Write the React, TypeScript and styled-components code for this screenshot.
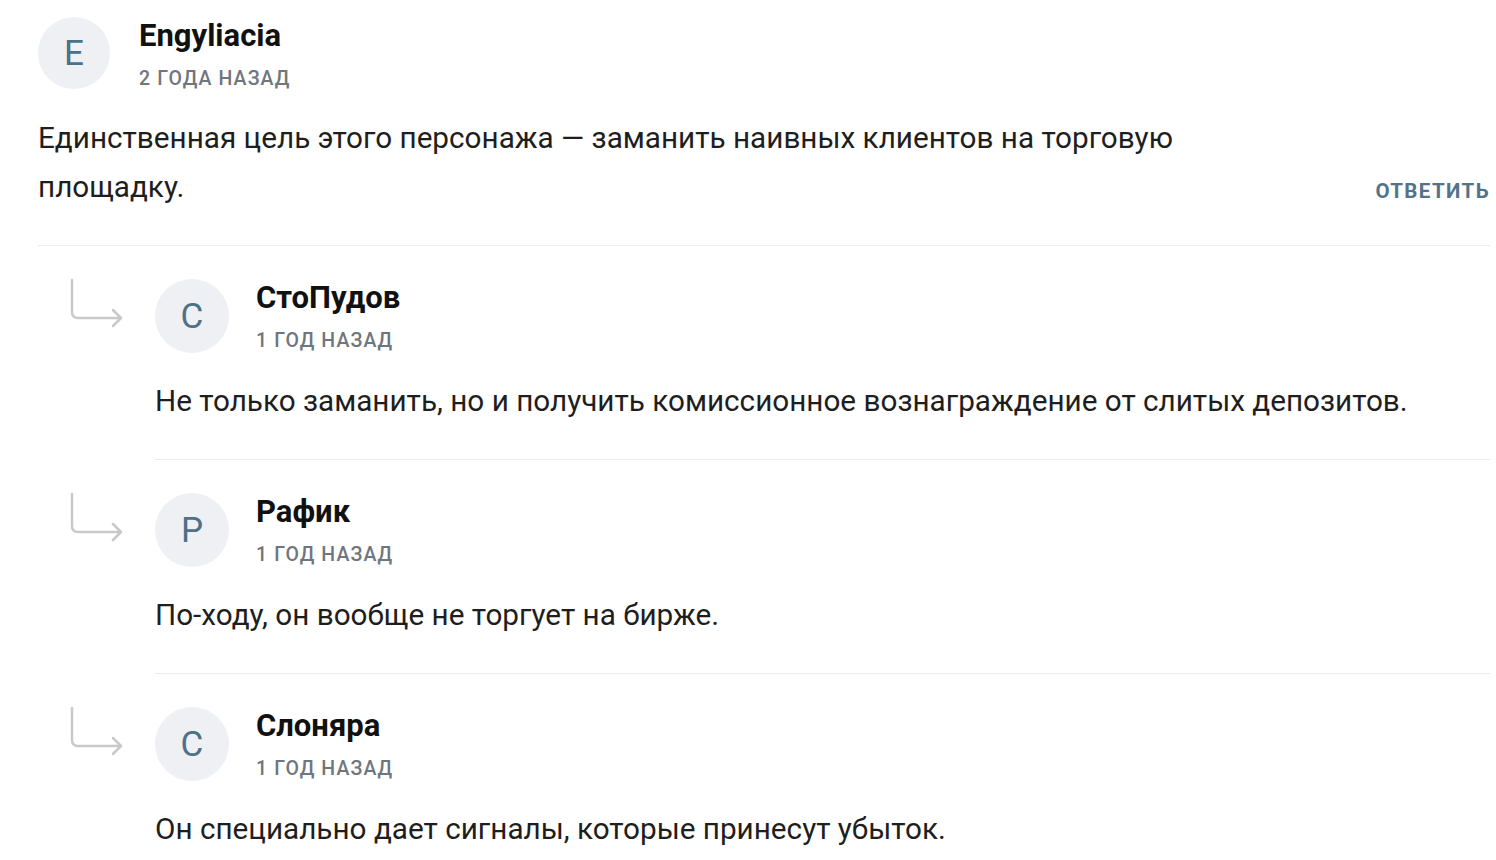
import React from 'react'
import styled, { createGlobalStyle } from 'styled-components'

const GlobalStyle = createGlobalStyle`
  html, body {
    margin: 0;
    padding: 0;
    background: #ffffff;
    font-family: Roboto, "Noto Sans", "Liberation Sans", sans-serif;
  }
`

const Page = styled.div`
  padding: 17px 6px 0 38px;
`

const Comment = styled.div`
  display: flex;
  flex-direction: column;
`

const Header = styled.div<{ $gap: number }>`
  display: flex;
  align-items: flex-start;
  gap: ${p => p.$gap}px;
`

const Avatar = styled.div<{ $size: number }>`
  width: ${p => p.$size}px;
  height: ${p => p.$size}px;
  border-radius: 50%;
  background: #eef0f3;
  color: #4d7187;
  font-size: 35px;
  display: flex;
  align-items: center;
  justify-content: center;
  flex-shrink: 0;
`

const Meta = styled.div`
  display: flex;
  flex-direction: column;
  padding-top: 1px;
`

const Name = styled.div`
  font-size: 31px;
  font-weight: 700;
  line-height: 36px;
  color: #111111;
`

const Date = styled.div`
  margin-top: 13px;
  font-size: 19.5px;
  font-weight: 500;
  line-height: 24px;
  letter-spacing: 1.1px;
  text-transform: uppercase;
  color: #6f767d;
`

const BodyRow = styled.div<{ $last?: boolean; $gap: number }>`
  display: flex;
  align-items: flex-end;
  justify-content: space-between;
  margin-top: ${p => p.$gap}px;
  padding-bottom: 34px;
  border-bottom: ${p => (p.$last ? 'none' : '1px solid #ececec')};
`

const Text = styled.p<{ $narrow?: boolean }>`
  margin: 0;
  max-width: ${p => (p.$narrow ? '1200px' : 'none')};
  font-size: 29.7px;
  line-height: 49px;
  color: #1e1e1e;
`

const ReplyButton = styled.button`
  border: none;
  background: none;
  padding: 0;
  margin-bottom: 8px;
  font-family: inherit;
  font-size: 20.5px;
  font-weight: 700;
  line-height: 24px;
  letter-spacing: 1.4px;
  color: #527389;
  cursor: pointer;
`

const Reply = styled.div`
  display: flex;
`

const ArrowCell = styled.div`
  width: 117px;
  flex-shrink: 0;
  padding: 32px 0 0 30px;
  box-sizing: border-box;
`

const ReplyBody = styled.div`
  flex: 1;
  padding-top: 33px;
`

const ReplyArrow = () => (
  <svg width="56" height="50" viewBox="0 0 56 50" fill="none">
    <path
      d="M4 2 V34 Q4 40 10 40 H53 M45 32 L53 40 L45 48"
      stroke="#c9c9c9"
      strokeWidth="2.5"
      strokeLinecap="round"
      strokeLinejoin="round"
    />
  </svg>
)

const replies = [
  {
    letter: 'С',
    name: 'СтоПудов',
    date: '1 год назад',
    text: 'Не только заманить, но и получить комиссионное вознаграждение от слитых депозитов.',
  },
  { letter: 'Р', name: 'Рафик', date: '1 год назад', text: 'По-ходу, он вообще не торгует на бирже.' },
  {
    letter: 'С',
    name: 'Слоняра',
    date: '1 год назад',
    text: 'Он специально дает сигналы, которые принесут убыток.',
  },
]

const App: React.FC = () => {
  return (
    <>
      <GlobalStyle />
      <Page>
        <Comment>
          <Header $gap={29}>
            <Avatar $size={72}>E</Avatar>
            <Meta>
              <Name>Engyliacia</Name>
              <Date>2 года назад</Date>
            </Meta>
          </Header>
          <BodyRow $gap={22}>
            <Text $narrow>
              Единственная цель этого персонажа — заманить наивных клиентов на торговую площадку.
            </Text>
            <ReplyButton>ОТВЕТИТЬ</ReplyButton>
          </BodyRow>
        </Comment>

        {replies.map((r, i) => (
          <Reply key={i}>
            <ArrowCell>
              <ReplyArrow />
            </ArrowCell>
            <ReplyBody>
              <Header $gap={27}>
                <Avatar $size={74}>{r.letter}</Avatar>
                <Meta>
                  <Name>{r.name}</Name>
                  <Date>{r.date}</Date>
                </Meta>
              </Header>
              <BodyRow $gap={23} $last={i === replies.length - 1}>
                <Text>{r.text}</Text>
              </BodyRow>
            </ReplyBody>
          </Reply>
        ))}
      </Page>
    </>
  )
}

export default App
